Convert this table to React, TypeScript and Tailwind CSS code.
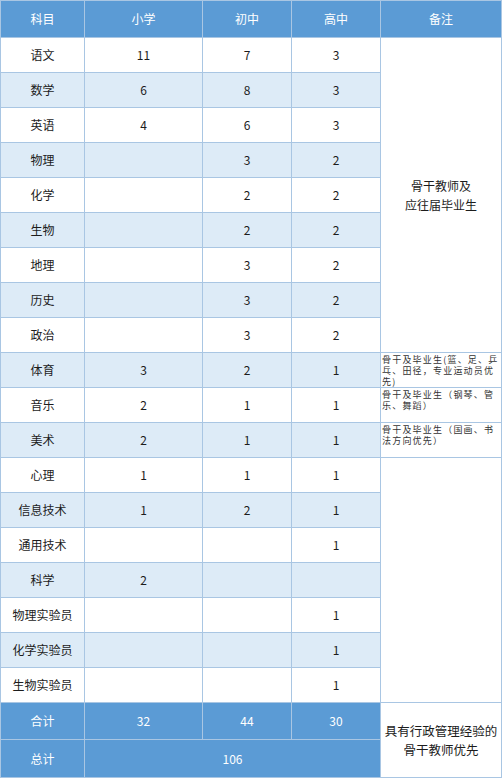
import React from 'react';

type Row = { name: string; p?: string; m?: string; h?: string };

const rows: Row[] = [
  { name: '语文', p: '11', m: '7', h: '3' },
  { name: '数学', p: '6', m: '8', h: '3' },
  { name: '英语', p: '4', m: '6', h: '3' },
  { name: '物理', m: '3', h: '2' },
  { name: '化学', m: '2', h: '2' },
  { name: '生物', m: '2', h: '2' },
  { name: '地理', m: '3', h: '2' },
  { name: '历史', m: '3', h: '2' },
  { name: '政治', m: '3', h: '2' },
  { name: '体育', p: '3', m: '2', h: '1' },
  { name: '音乐', p: '2', m: '1', h: '1' },
  { name: '美术', p: '2', m: '1', h: '1' },
  { name: '心理', p: '1', m: '1', h: '1' },
  { name: '信息技术', p: '1', m: '2', h: '1' },
  { name: '通用技术', h: '1' },
  { name: '科学', p: '2' },
  { name: '物理实验员', h: '1' },
  { name: '化学实验员', h: '1' },
  { name: '生物实验员', h: '1' },
];

// small notes for 体育 / 音乐 / 美术, already split into lines
const notes: Record<number, string[]> = {
  9: ['骨干及毕业生(篮、足、乒', '乓、田径，专业运动员优', '先)'],
  10: ['骨干及毕业生（钢琴、管', '乐、舞蹈）'],
  11: ['骨干及毕业生（国画、书', '法方向优先）'],
};

const cell = 'flex items-center justify-center';

function Note({ lines }: { lines: string[] }) {
  return (
    <div className="bg-white pl-[1px] pt-[1px] text-[9px] leading-[11px] tracking-[1.2px] text-[#333] whitespace-nowrap overflow-hidden">
      {lines.map((l, i) => (
        <div key={i}>{l}</div>
      ))}
    </div>
  );
}

export default function App() {
  return (
    <div className="bg-white min-h-[781px]" style={{ fontFamily: '"Noto Sans CJK SC", "Noto Sans", sans-serif' }}>
      <div className="grid w-[502px] grid-cols-[83px_117px_88px_88px_120px] grid-rows-[36px_repeat(19,34px)_36px_37px] gap-px bg-[#a9c6e3] p-px text-[12px] text-[#1c1c1c]">
        {['科目', '小学', '初中', '高中', '备注'].map((t) => (
          <div key={t} className={`${cell} bg-[#5b9bd5] text-white`}>
            {t}
          </div>
        ))}

        {rows.map((r, i) => {
          const bg = i % 2 === 1 ? 'bg-[#ddebf7]' : 'bg-white';
          return (
            <React.Fragment key={r.name}>
              <div className={`${cell} ${bg}`}>{r.name}</div>
              <div className={`${cell} ${bg}`}>{r.p}</div>
              <div className={`${cell} ${bg}`}>{r.m}</div>
              <div className={`${cell} ${bg}`}>{r.h}</div>
              {i === 0 && (
                <div className={`${cell} row-span-9 bg-white flex-col leading-[19px]`}>
                  <span>骨干教师及</span>
                  <span>应往届毕业生</span>
                </div>
              )}
              {notes[i] && <Note lines={notes[i]} />}
              {i === 12 && <div className="row-span-7 bg-white" />}
            </React.Fragment>
          );
        })}

        {/* totals */}
        <div className={`${cell} bg-[#5b9bd5] text-white`}>合计</div>
        <div className={`${cell} bg-[#5b9bd5] text-white`}>32</div>
        <div className={`${cell} bg-[#5b9bd5] text-white`}>44</div>
        <div className={`${cell} bg-[#5b9bd5] text-white`}>30</div>
        <div className={`${cell} row-span-2 bg-white flex-col leading-[19px] text-[12.5px]`}>
          <span>具有行政管理经验的</span>
          <span>骨干教师优先</span>
        </div>
        <div className={`${cell} bg-[#5b9bd5] text-white`}>总计</div>
        <div className={`${cell} col-span-3 bg-[#5b9bd5] text-white`}>106</div>
      </div>
    </div>
  );
}
